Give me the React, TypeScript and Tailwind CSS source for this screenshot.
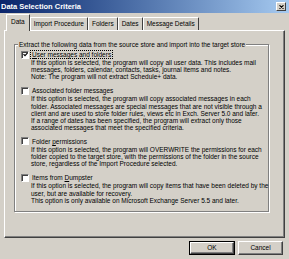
import React from "react";

type Item = {
  label: React.ReactNode;
  lines: string[];
  checked?: boolean;
  focus?: boolean;
};

const ITEMS: Item[] = [
  {
    label: (
      <>
        <u>U</u>ser messages and folders
      </>
    ),
    checked: true,
    focus: true,
    lines: [
      "If this option is selected, the program will copy all user data. This includes mail",
      "messages, folders, calendar, contacts, tasks, journal items and notes.",
      "Note: The program will not extract Schedule+ data.",
    ],
  },
  {
    label: "Associated folder messages",
    lines: [
      "If this option is selected, the program will copy associated messages in each",
      "folder. Associated messages are special messages that are not visible through a",
      "client and are used to store folder rules, views etc in Exch. Server 5.0 and later.",
      "If a range of dates has been specified, the program will extract only those",
      "associated messages that meet the specified criteria.",
    ],
  },
  {
    label: (
      <>
        Folder <u>p</u>ermissions
      </>
    ),
    lines: [
      "If this option is selected, the program will OVERWRITE the permissions for each",
      "folder copied to the target store, with the permissions of the folder in the source",
      "store, regardless of the Import Procedure selected.",
    ],
  },
  {
    label: (
      <>
        Items from <u>D</u>umpster
      </>
    ),
    lines: [
      "If this option is selected, the program will copy items that have been deleted by the",
      "user, but are available for recovery.",
      "This option is only available on Microsoft Exchange Server 5.5 and later.",
    ],
  },
];

const TABS = ["Data", "Import Procedure", "Folders", "Dates", "Message Details"];

function Checkbox({ checked }: { checked?: boolean }) {
  return (
    <span className="flex h-[8px] w-[8px] flex-shrink-0 items-center justify-center border border-[#808080] border-b-white border-r-white bg-white shadow-[inset_1px_1px_0_#404040]">
      {checked && (
        <svg width="5" height="5" viewBox="0 0 5 5">
          <path d="M0.5 2.2 L2 3.7 L4.6 0.9" stroke="#000" strokeWidth="1.2" fill="none" />
        </svg>
      )}
    </span>
  );
}

function Button({ children, isDefault }: { children: React.ReactNode; isDefault?: boolean }) {
  const inner = (
    <button className="flex h-full w-full items-center justify-center border border-white border-b-[#404040] border-r-[#404040] bg-[#d4d0c8] shadow-[inset_-1px_-1px_0_#808080] text-[6.5px] leading-none text-black">
      {children}
    </button>
  );
  return isDefault ? (
    <div className="h-[14px] w-[46px] border border-black">{inner}</div>
  ) : (
    <div className="h-[14px] w-[45px]">{inner}</div>
  );
}

export default function App() {
  return (
    <div
      className="flex h-[259px] w-[289px] flex-col overflow-hidden bg-[#d4d0c8] text-black"
      style={{ fontFamily: '"Liberation Sans", Arial, sans-serif' }}
    >
      {/* title bar */}
      <div className="flex h-[13px] items-center justify-between bg-gradient-to-r from-[#0a246a] to-[#a6caf0] pl-[1px] pr-[3px]">
        <span className="text-[7.5px] font-bold leading-none text-white">Data Selection Criteria</span>
        <span className="flex h-[9px] w-[10px] items-center justify-center border border-white border-b-[#404040] border-r-[#404040] bg-[#d4d0c8]">
          <svg width="5" height="4" viewBox="0 0 5 4">
            <path d="M0.5 0.3 L4.5 3.7 M4.5 0.3 L0.5 3.7" stroke="#000" strokeWidth="1.1" />
          </svg>
        </span>
      </div>

      <div className="flex flex-col px-[4px] pt-[1px]">
        {/* tabs */}
        <div className="relative z-10 flex h-[16px] items-end pl-[2px]">
          {TABS.map((t, i) =>
            i === 0 ? (
              <div
                key={t}
                className="-mb-[1px] flex h-[17px] items-center rounded-t-[1px] border-l border-r border-t border-white border-r-[#404040] bg-[#d4d0c8] px-[4px] pb-[1px] text-[6.5px] leading-none"
              >
                {t}
              </div>
            ) : (
              <div
                key={t}
                className="flex h-[13px] items-center rounded-t-[1px] border-l border-r border-t border-white border-r-[#404040] px-[3px] text-[6.5px] leading-none"
              >
                {t}
              </div>
            )
          )}
        </div>

        {/* panel */}
        <div className="flex h-[208px] flex-col border border-white border-b-[#404040] border-r-[#404040] shadow-[inset_-1px_-1px_0_#808080]">
          <div className="relative ml-[9px] mr-[15px] mt-[13px] border border-[#808080] pb-[7px] pl-[6px] pt-[5px] shadow-[1px_1px_0_#fff,inset_1px_1px_0_#fff]">
            <span className="absolute -top-[4px] left-[3px] bg-[#d4d0c8] px-[1px] text-[6.5px] leading-[7px]">
              Extract the following data from the source store and import into the target store
            </span>
            <div className="flex flex-col gap-[6px]">
              {ITEMS.map((it, i) => (
                <div key={i} className="flex flex-col">
                  <div className="flex items-center gap-[1px]">
                    <Checkbox checked={it.checked} />
                    <span
                      className={`text-[6.5px] leading-[7.1px] ${
                        it.focus ? "border border-dotted border-black px-[1px]" : "border border-transparent px-[1px]"
                      }`}
                    >
                      {it.label}
                    </span>
                  </div>
                  <div className="flex flex-col pl-[10px] text-[6.5px] leading-[7.1px]">
                    {it.lines.map((l) => (
                      <span key={l} className="whitespace-nowrap">
                        {l}
                      </span>
                    ))}
                  </div>
                </div>
              ))}
            </div>
          </div>
        </div>
      </div>

      {/* buttons */}
      <div className="flex justify-end gap-[3px] pr-[6px] pt-[3px]">
        <Button isDefault>OK</Button>
        <Button>Cancel</Button>
      </div>
    </div>
  );
}
